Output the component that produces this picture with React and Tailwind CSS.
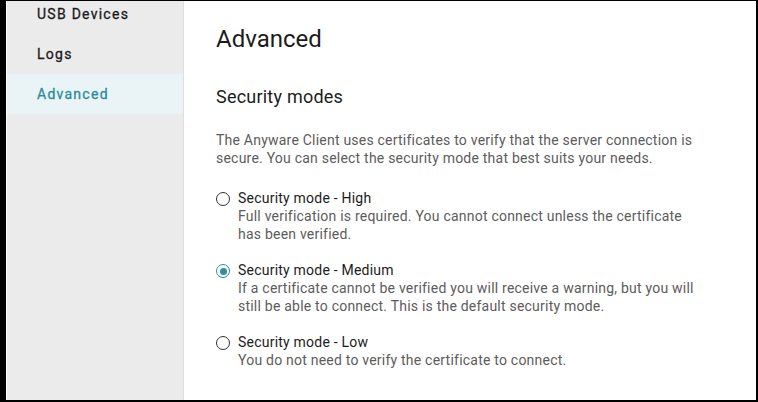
import React, { useState } from 'react';

const navItems = ['USB Devices', 'Logs', 'Advanced'];

const modes = [
  {
    id: 'high',
    title: 'Security mode - High',
    desc: 'Full verification is required. You cannot connect unless the certificate has been verified.',
  },
  {
    id: 'medium',
    title: 'Security mode - Medium',
    desc: 'If a certificate cannot be verified you will receive a warning, but you will still be able to connect. This is the default security mode.',
  },
  {
    id: 'low',
    title: 'Security mode - Low',
    desc: 'You do not need to verify the certificate to connect.',
  },
];

const Radio = ({ checked }) => (
  <span
    className={`mt-[3px] w-[14px] h-[14px] rounded-full border-[1.5px] flex items-center justify-center shrink-0 ${
      checked ? 'border-[#2a919f]' : 'border-[#333]'
    }`}
  >
    {checked && <span className="w-[7px] h-[7px] rounded-full bg-[#2a919f]" />}
  </span>
);

const App = () => {
  const [mode, setMode] = useState('medium');

  return (
    <div
      className="w-[758px] h-[402px] flex overflow-hidden bg-white border-black border-l-[6px] border-t border-r-2 border-b-2"
      style={{ fontFamily: 'Roboto, "Liberation Sans", sans-serif' }}
    >
      {/* Sidebar */}
      <div className="w-[177px] shrink-0 ml-px bg-[#ebebeb] border-r border-[#dedede] -mt-[7px]">
        {navItems.map((item) => (
          <div
            key={item}
            className={`h-10 flex items-center pl-[30px] text-[14px] tracking-[0.09em] [-webkit-text-stroke:0.3px] ${
              item === 'Advanced' ? 'bg-[#eaf4f6] text-[#2b8d9c]' : 'text-[#1a1a1a]'
            }`}
          >
            {item}
          </div>
        ))}
      </div>

      {/* Content */}
      <div className="flex-1 pl-8 pt-[22px] tracking-[0.22px]">
        <h1 className="text-[24px] leading-8 text-[#1c1c1c] tracking-normal">Advanced</h1>
        <h2 className="mt-[30px] text-[18px] leading-6 text-[#1c1c1c]">Security modes</h2>
        <p className="mt-[22px] max-w-[484px] text-[14px] leading-[18px] text-[#5c5c5c]">
          The Anyware Client uses certificates to verify that the server connection is secure. You can select the security mode that best suits your needs.
        </p>

        <div className="mt-[22px] flex flex-col gap-[18px]">
          {modes.map((m) => (
            <label key={m.id} className="flex gap-2 cursor-pointer" onClick={() => setMode(m.id)}>
              <Radio checked={mode === m.id} />
              <div className="max-w-[462px] text-[14px] leading-[18px]">
                <div className="text-[#1c1c1c]">{m.title}</div>
                <div className="text-[#5c5c5c]">{m.desc}</div>
              </div>
            </label>
          ))}
        </div>
      </div>
    </div>
  );
};

export default App;
